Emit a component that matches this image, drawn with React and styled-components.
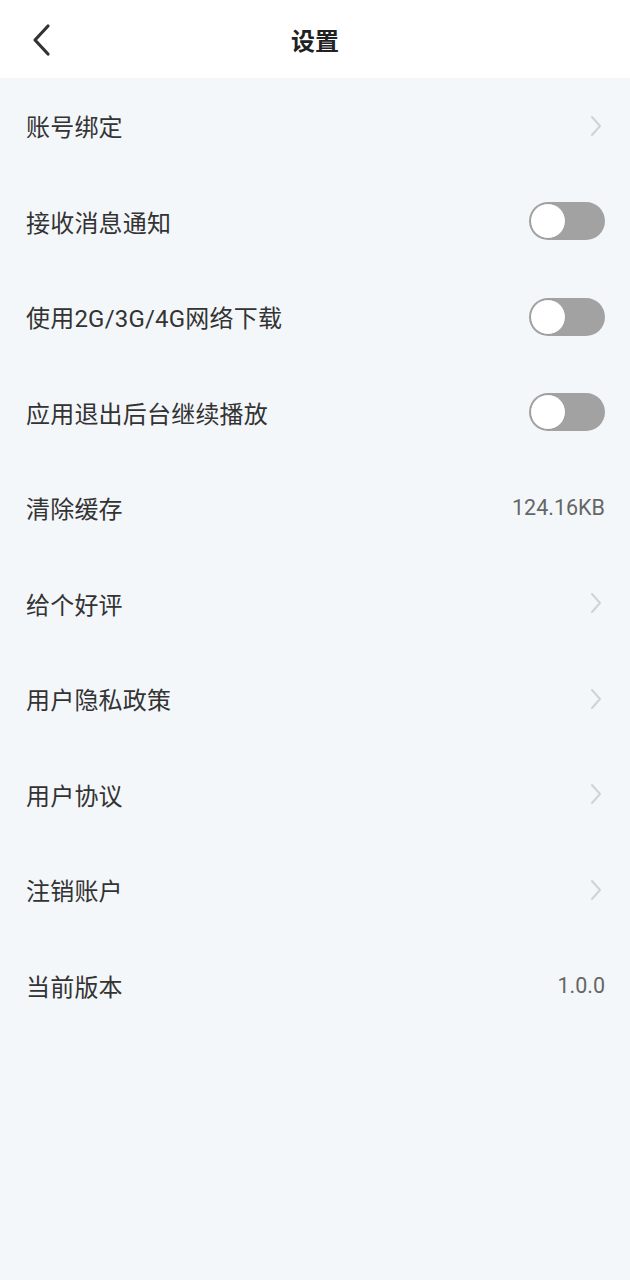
import React, { useState } from "react";
import styled, { createGlobalStyle } from "styled-components";

const GlobalStyle = createGlobalStyle`
  html, body {
    margin: 0;
    padding: 0;
    background: #f3f7fa;
    font-family: Roboto, "Noto Sans CJK SC", "Noto Sans", sans-serif;
  }
`;

const Page = styled.div`
  min-height: 1280px;
  background: #f3f7fa;
`;

const Header = styled.div`
  height: 78px;
  background: #fff;
  display: flex;
  align-items: center;
  justify-content: center;
  position: relative;
`;

const BackButton = styled.div`
  position: absolute;
  left: 30px;
  top: 22px;
  width: 26px;
  height: 36px;
  display: flex;
  align-items: center;
`;

const Title = styled.div`
  font-size: 24px;
  font-weight: 700;
  color: #222;
`;

const List = styled.div`
  display: flex;
  flex-direction: column;
`;

const Row = styled.div`
  height: 95.5px;
  display: flex;
  align-items: center;
  justify-content: space-between;
  padding: 0 25px 0 26px;
  box-sizing: border-box;
`;

const Label = styled.div`
  font-size: 24px;
  color: #333;
  letter-spacing: 0.2px;
`;

const Value = styled.div`
  font-size: 21.5px;
  color: #666;
`;

const Track = styled.div`
  width: 76px;
  height: 38px;
  border-radius: 19px;
  background: ${(p) => (p.$on ? "#4c8bf5" : "#a2a2a2")};
  position: relative;
  cursor: pointer;
`;

const Knob = styled.div`
  position: absolute;
  top: 1px;
  left: ${(p) => (p.$on ? "39px" : "1px")};
  width: 34px;
  height: 34px;
  border-radius: 50%;
  background: #fff;
  border: 1px solid #9a9a9a;
`;

const Chevron = () => (
  <svg width="14" height="22" viewBox="0 0 14 22" style={{ marginRight: 2 }}>
    <path d="M3 2 L11 11 L3 20" fill="none" stroke="#cfd3d6" strokeWidth="2" strokeLinecap="round" strokeLinejoin="round" />
  </svg>
);

const Toggle = () => {
  const [on, setOn] = useState(false);
  return (
    <Track $on={on} onClick={() => setOn(!on)}>
      <Knob $on={on} />
    </Track>
  );
};

const rows = [
  { label: "账号绑定", type: "link" },
  { label: "接收消息通知", type: "toggle" },
  { label: "使用2G/3G/4G网络下载", type: "toggle" },
  { label: "应用退出后台继续播放", type: "toggle" },
  { label: "清除缓存", type: "value", value: "124.16KB" },
  { label: "给个好评", type: "link" },
  { label: "用户隐私政策", type: "link" },
  { label: "用户协议", type: "link" },
  { label: "注销账户", type: "link" },
  { label: "当前版本", type: "value", value: "1.0.0" },
];

export default function App() {
  return (
    <Page>
      <GlobalStyle />
      <Header>
        <BackButton>
          <svg width="22" height="34" viewBox="0 0 22 34">
            <path d="M18 3 L5 17 L18 31" fill="none" stroke="#333" strokeWidth="3.2" strokeLinecap="round" strokeLinejoin="round" />
          </svg>
        </BackButton>
        <Title>设置</Title>
      </Header>
      <List>
        {rows.map((r) => (
          <Row key={r.label}>
            <Label>{r.label}</Label>
            {r.type === "link" && <Chevron />}
            {r.type === "toggle" && <Toggle />}
            {r.type === "value" && <Value>{r.value}</Value>}
          </Row>
        ))}
      </List>
    </Page>
  );
}
